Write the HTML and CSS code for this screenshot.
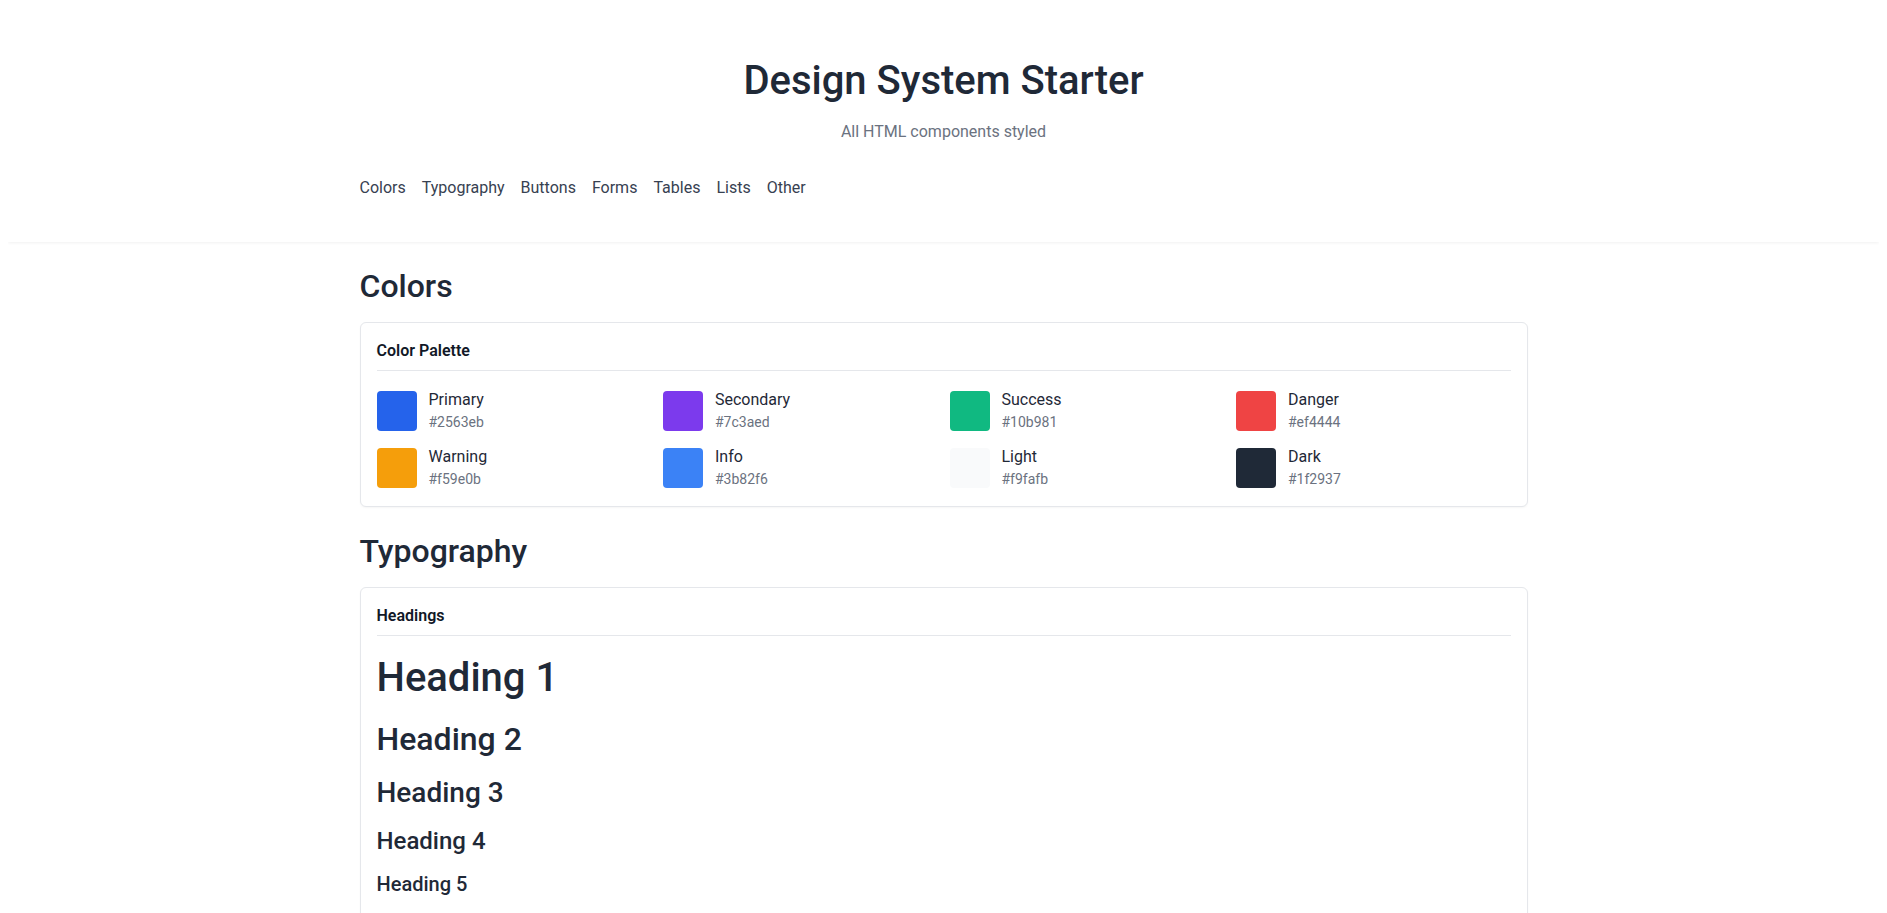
FILE: index.html
```html
<!DOCTYPE html>
<html lang="en">
<head>
<meta charset="utf-8">
<title>Design System Starter</title>
<link rel="stylesheet" href="styles.css">
</head>
<body>
<header class="site-header">
  <div class="container">
    <h1 class="site-title">Design System Starter</h1>
    <p class="site-subtitle">All HTML components styled</p>
    <nav class="site-nav">
      <a href="#colors">Colors</a>
      <a href="#typography">Typography</a>
      <a href="#buttons">Buttons</a>
      <a href="#forms">Forms</a>
      <a href="#tables">Tables</a>
      <a href="#lists">Lists</a>
      <a href="#other">Other</a>
    </nav>
  </div>
</header>

<main class="container main">
  <section class="section" id="colors">
    <h2 class="section-title">Colors</h2>
    <div class="card">
      <h3 class="card-title">Color Palette</h3>
      <div class="swatch-grid">
        <div class="swatch-item"><span class="swatch sw-primary"></span><div class="swatch-text"><div class="swatch-name">Primary</div><div class="swatch-hex">#2563eb</div></div></div>
        <div class="swatch-item"><span class="swatch sw-secondary"></span><div class="swatch-text"><div class="swatch-name">Secondary</div><div class="swatch-hex">#7c3aed</div></div></div>
        <div class="swatch-item"><span class="swatch sw-success"></span><div class="swatch-text"><div class="swatch-name">Success</div><div class="swatch-hex">#10b981</div></div></div>
        <div class="swatch-item"><span class="swatch sw-danger"></span><div class="swatch-text"><div class="swatch-name">Danger</div><div class="swatch-hex">#ef4444</div></div></div>
        <div class="swatch-item"><span class="swatch sw-warning"></span><div class="swatch-text"><div class="swatch-name">Warning</div><div class="swatch-hex">#f59e0b</div></div></div>
        <div class="swatch-item"><span class="swatch sw-info"></span><div class="swatch-text"><div class="swatch-name">Info</div><div class="swatch-hex">#3b82f6</div></div></div>
        <div class="swatch-item"><span class="swatch sw-light"></span><div class="swatch-text"><div class="swatch-name">Light</div><div class="swatch-hex">#f9fafb</div></div></div>
        <div class="swatch-item"><span class="swatch sw-dark"></span><div class="swatch-text"><div class="swatch-name">Dark</div><div class="swatch-hex">#1f2937</div></div></div>
      </div>
    </div>
  </section>

  <section class="section" id="typography">
    <h2 class="section-title">Typography</h2>
    <div class="card">
      <h3 class="card-title">Headings</h3>
      <div class="headings">
        <h1 class="demo-h1">Heading 1</h1>
        <h2 class="demo-h2">Heading 2</h2>
        <h3 class="demo-h3">Heading 3</h3>
        <h4 class="demo-h4">Heading 4</h4>
        <h5 class="demo-h5">Heading 5</h5>
        <h6 class="demo-h6">Heading 6</h6>
      </div>
    </div>
  </section>
</main>
</body>
</html>
```

FILE: styles.css
```css
* {
  box-sizing: border-box;
}

body {
  margin: 8px;
  background: #ffffff;
  color: #1f2937;
  font-family: Roboto, "Liberation Sans", Arial, sans-serif;
  font-size: 16px;
  line-height: 1.5;
}

.container {
  max-width: 1200px;
  margin: 0 auto;
  padding: 0 16px;
}

.site-header {
  background: #ffffff;
  box-shadow: 0 1px 3px rgba(0, 0, 0, 0.06);
  padding: 50px 0 42px;
}

.site-title {
  margin: 0 0 16px;
  text-align: center;
  font-size: 40px;
  line-height: 46px;
  font-weight: 500;
  color: #1f2937;
}

.site-subtitle {
  margin: 0;
  text-align: center;
  color: #6b7280;
  font-size: 16px;
  line-height: 24px;
}

.site-nav {
  margin-top: 32px;
  display: flex;
  gap: 16px;
}

.site-nav a {
  color: #374151;
  text-decoration: none;
  font-size: 16px;
  line-height: 24px;
}

.main {
  padding-top: 24px;
}

.section {
  margin-bottom: 24px;
}

.section-title {
  margin: 0 0 16px;
  font-size: 32px;
  line-height: 40px;
  font-weight: 500;
  color: #1f2937;
}

.card {
  background: #ffffff;
  border: 1px solid #e5e7eb;
  border-radius: 6px;
  box-shadow: 0 1px 2px rgba(0, 0, 0, 0.04);
  padding: 16px;
}

.card-title {
  margin: 0 0 17px;
  padding-bottom: 7px;
  border-bottom: 1px solid #e5e7eb;
  font-size: 16px;
  line-height: 24px;
  font-weight: 600;
  color: #111827;
}

.swatch-grid {
  display: grid;
  grid-template-columns: repeat(4, 1fr);
  gap: 12px;
}

.swatch-item {
  display: flex;
  align-items: center;
  gap: 12px;
}

.swatch {
  width: 40px;
  height: 40px;
  border-radius: 4px;
  flex: none;
}

.sw-primary { background: #2563eb; }
.sw-secondary { background: #7c3aed; }
.sw-success { background: #10b981; }
.sw-danger { background: #ef4444; }
.sw-warning { background: #f59e0b; }
.sw-info { background: #3b82f6; }
.sw-light { background: #f9fafb; }
.sw-dark { background: #1f2937; }

.swatch-name {
  font-size: 16px;
  line-height: 24px;
  color: #1f2937;
}

.swatch-hex {
  font-size: 14px;
  line-height: 21px;
  color: #6b7280;
}

.headings h1,
.headings h2,
.headings h3,
.headings h4,
.headings h5,
.headings h6 {
  margin: 0 0 16px;
  line-height: 1.25;
  font-weight: 500;
  color: #1f2937;
}

.headings .demo-h1 { font-size: 40px; margin-top: 4px; }
.headings .demo-h2 { font-size: 32px; }
.headings .demo-h3 { font-size: 28px; }
.headings .demo-h4 { font-size: 24px; }
.headings .demo-h5 { font-size: 20px; }
.headings .demo-h6 { font-size: 16px; }
```
